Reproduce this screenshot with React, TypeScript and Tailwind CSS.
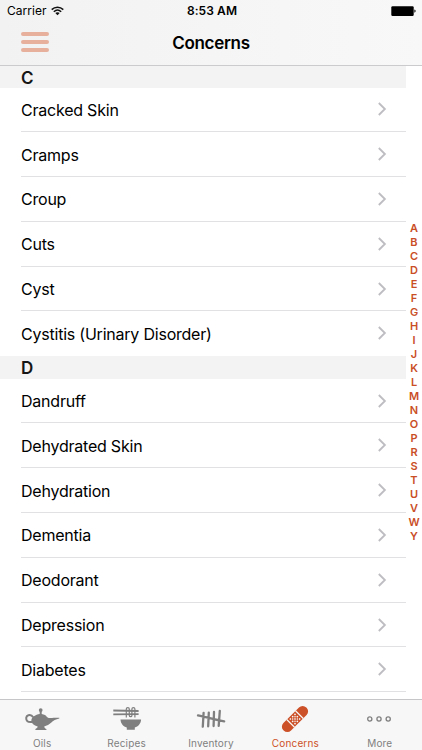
import type { ReactNode } from 'react';

interface Section {
  letter: string;
  items: string[];
}

interface Tab {
  label: string;
  icon: ReactNode;
  active?: boolean;
}

const SECTIONS: Section[] = [
  {
    letter: 'C',
    items: ['Cracked Skin', 'Cramps', 'Croup', 'Cuts', 'Cyst', 'Cystitis (Urinary Disorder)'],
  },
  {
    letter: 'D',
    items: ['Dandruff', 'Dehydrated Skin', 'Dehydration', 'Dementia', 'Deodorant', 'Depression', 'Diabetes'],
  },
];

const INDEX = 'ABCDEFGHIJKLMNOPRSTUVWY'.split('');

const WifiIcon = () => (
  <svg width="13" height="10" viewBox="0 0 13 10" fill="none" stroke="#111" strokeWidth="1.5">
    <path d="M0.7 3.6C4 0.3 9 0.3 12.3 3.6" />
    <path d="M2.8 5.8C5 3.7 8 3.7 10.2 5.8" />
    <path d="M6.5 9.3L4.3 7.1C5.5 5.9 7.5 5.9 8.7 7.1Z" fill="#111" stroke="none" />
  </svg>
);

const BatteryIcon = () => (
  <svg width="25" height="11" viewBox="0 0 25 11">
    <rect x="0.3" y="0.2" width="22.4" height="9.8" rx="1.2" />
    <path d="M23.4 3.5C25 3.9 25 6.3 23.4 6.7Z" />
  </svg>
);

const Chevron = () => (
  <svg className="mb-px" width="9" height="14" viewBox="0 0 9 14" fill="none" stroke="#bdbdc2" strokeWidth="1.8">
    <path d="M0.8 1L6.9 7L0.8 13" />
  </svg>
);

const LampIcon = () => (
  <svg width="36" height="24" viewBox="0 0 36 24" fill="currentColor">
    <circle cx="16.7" cy="3.1" r="1.9" />
    <path d="M15.7 4h2v3c2.6.4 4.4 1.6 5 2.7 2.8 2.3 5 1.1 7 1.1h5.6v.7c-4.8.8-7.2 3.5-9.9 5.6-1.9 1.4-3.6 2-5.2 2.3.2 1.3 1.3 2.2 2.2 2.5v1.2h-11v-1.2c1.1-.4 2.1-1.2 2.3-2.5-4-.8-6-3.3-6.4-6 .2-3.2 4.2-5.9 8.4-6.4z" />
    <path d="M9.2 10.2C8 8.3 6 7.7 4.3 8.2 1.6 9 1.7 12.6 3.4 14.2c1.6 1.5 4 .4 6.1 1" fill="none" stroke="currentColor" strokeWidth="2" />
  </svg>
);

const BowlIcon = () => (
  <svg width="30" height="26" viewBox="0 0 30 26" fill="currentColor">
    <path d="M1.3 3.5L26.6 4.1v1.9L1.3 5.6zM1.3 7.4L26.6 7.2v1.9L1.3 9.3z" />
    <path
      d="M14.3 11.4V3.1a1.5 1.5 0 0 1 3 0V9.4a1.3 1.3 0 0 0 2.6 0V3.1a1.5 1.5 0 0 1 3 0V11.4"
      fill="none"
      stroke="currentColor"
      strokeWidth="1.2"
    />
    <path d="M8.5 13.6h20.6c-.2 4.2-3 7-6.3 8v2.2h-8v-2.2c-3.4-1-6.1-3.8-6.3-8z" />
  </svg>
);

const TallyIcon = () => (
  <svg width="30" height="20" viewBox="0 0 30 20" fill="none" stroke="currentColor" strokeWidth="2.3" strokeLinecap="round">
    <path d="M7.6 3.8L6.8 17.7M12.8 3.6L12.2 17.3M18 3L17.6 17M23.8 1.9L22.7 16.8M2 6.4C11 8.1 20 10.9 28.2 12.3" />
  </svg>
);

const BandageIcon = () => (
  <svg width="28" height="28" viewBox="0 0 28 28">
    <g transform="rotate(-45 14 14)">
      <rect x="-2.2" y="8.6" width="32.4" height="10.8" rx="5.2" fill="currentColor" />
      <path d="M7.8 8.5v11M20.2 8.5v11" stroke="#f7f7f7" strokeWidth="1.2" />
      <g fill="#f7f7f7">
        {[10.7, 14, 17.3].map((x) =>
          [10.7, 14, 17.3].map((y) => <circle key={`${x}-${y}`} cx={x} cy={y} r="0.85" />)
        )}
        {[12.35, 15.65].map((x) =>
          [12.35, 15.65].map((y) => <circle key={`${x}-${y}`} cx={x} cy={y} r="0.75" />)
        )}
      </g>
    </g>
  </svg>
);

const MoreIcon = () => (
  <svg width="26" height="8" viewBox="0 0 26 8" fill="none" stroke="currentColor" strokeWidth="1.3">
    <circle cx="2.8" cy="4" r="2.1" />
    <circle cx="12" cy="4" r="2.1" />
    <circle cx="21.2" cy="4" r="2.1" />
  </svg>
);

const TABS: Tab[] = [
  { label: 'Oils', icon: <LampIcon /> },
  { label: 'Recipes', icon: <BowlIcon /> },
  { label: 'Inventory', icon: <TallyIcon /> },
  { label: 'Concerns', icon: <BandageIcon />, active: true },
  { label: 'More', icon: <MoreIcon /> },
];

export default function App() {
  return (
    <div className="flex h-[750px] w-[422px] flex-col overflow-hidden bg-white font-['Inter',sans-serif] text-black">
      {/* Status bar + navigation */}
      <header className="h-[66px] shrink-0 border-b border-[#cbcbcd] bg-gradient-to-r from-[#f2f2f2] to-[#f8f8f8]">
        <div className="grid h-[22px] grid-cols-3 items-center pl-[7px] pr-1.5">
          <div className="flex items-center gap-[5px] text-[12px] tracking-[0.02px]">
            <span>Carrier</span>
            <WifiIcon />
          </div>
          <span className="pl-px text-center text-[12px] font-semibold tracking-[0.1px]">8:53 AM</span>
          <div className="flex justify-end">
            <BatteryIcon />
          </div>
        </div>
        <div className="grid h-[43px] grid-cols-3 items-center">
          <button className="mb-[3px] ml-[21px] flex w-7 flex-col gap-1" aria-label="Menu">
            <span className="h-1 w-full rounded-full bg-[#e6b09c]" />
            <span className="h-1 w-full rounded-full bg-[#e6b09c]" />
            <span className="h-1 w-full rounded-full bg-[#e6b09c]" />
          </button>
          <h1 className="text-center text-[17px] font-semibold tracking-[-0.3px]">Concerns</h1>
        </div>
      </header>

      {/* Concern list with letter index */}
      <div className="flex min-h-0 flex-1 overflow-hidden">
        <main className="w-[406px] shrink-0">
          {SECTIONS.map((section) => (
            <section key={section.letter} className="group">
              <h2 className="flex h-[22.4px] items-center bg-[#f3f3f3] pl-[21px] pt-[3px] text-[17px] font-semibold text-[#161616] group-first:h-[21.5px]">
                {section.letter}
              </h2>
              <ul className="pl-[21px]">
                {section.items.map((item, i) => (
                  <li
                    key={item}
                    className={`flex h-[44.8px] items-center justify-between border-b pr-[19px] pt-px text-[16px] tracking-[-0.22px] ${
                      i === section.items.length - 1 && section.letter === 'C' ? 'border-transparent' : 'border-[#e1e1e3]'
                    }`}
                  >
                    <span>{item}</span>
                    <Chevron />
                  </li>
                ))}
              </ul>
            </section>
          ))}
        </main>
        <nav className="flex flex-1 flex-col items-center pt-[155px] text-[11px] font-semibold leading-[14px] text-[#c94e26]">
          {INDEX.map((letter) => (
            <span key={letter}>{letter}</span>
          ))}
        </nav>
      </div>

      {/* Tab bar */}
      <footer className="grid h-[51px] shrink-0 grid-cols-5 border-t border-[#c6c6c8] bg-[#f7f7f7]">
        {TABS.map((tab) => (
          <button
            key={tab.label}
            className={`flex flex-col items-center ${tab.active ? 'text-[#cd5128]' : 'text-[#7f7f7f]'}`}
          >
            <span className="flex h-[38px] items-center justify-center">{tab.icon}</span>
            <span className="text-[10px] leading-[10px] tracking-[0.15px]">{tab.label}</span>
          </button>
        ))}
      </footer>
    </div>
  );
}
